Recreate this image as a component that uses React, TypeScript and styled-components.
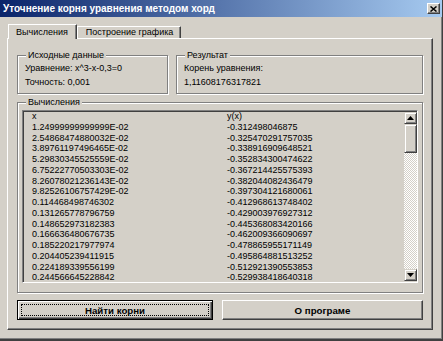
import styled, { createGlobalStyle } from "styled-components";

const GlobalStyle = createGlobalStyle`
  html, body {
    margin: 0;
    padding: 0;
    background: #d4d0c8;
  }
  body {
    font-family: "Liberation Sans", Arial, sans-serif;
    font-size: 9px;
    color: #000;
  }
`;

const Window = styled.div`
  width: 443px;
  height: 341px;
  box-sizing: border-box;
  background: #d4d0c8;
  border-right: 1px solid #404040;
  border-bottom: 2px solid #404040;
  box-shadow: inset -1px -1px 0 #808080;
  display: flex;
  flex-direction: column;
  overflow: hidden;
`;

const TitleBar = styled.div`
  flex: none;
  height: 17px;
  display: flex;
  align-items: center;
  justify-content: space-between;
  padding: 0 2px 0 3px;
  background: linear-gradient(to right, #0a246a, #a6caf0);
  color: #fff;
  font-weight: bold;
  font-size: 10px;
`;

const CloseBtn = styled.div`
  width: 13px;
  height: 11px;
  box-sizing: border-box;
  background: #d4d0c8;
  border: 1px solid;
  border-color: #fff #404040 #404040 #fff;
  box-shadow: inset -1px -1px 0 #808080;
  display: flex;
  align-items: center;
  justify-content: center;
`;

const TabStrip = styled.div`
  flex: none;
  display: flex;
  align-items: flex-end;
  height: 14px;
  margin-top: 7px;
  padding-left: 8px;
`;

const Tab = styled.div<{ $active?: boolean }>`
  box-sizing: border-box;
  height: ${(p) => (p.$active ? "15px" : "12px")};
  margin-bottom: ${(p) => (p.$active ? "-1px" : "0")};
  position: relative;
  z-index: ${(p) => (p.$active ? 1 : 0)};
  padding: ${(p) => (p.$active ? "2px 8px 0 7px" : "0 7px 0 8px")};
  line-height: 11px;
  background: #d4d0c8;
  border-top: 1px solid #fff;
  border-left: 1px solid #fff;
  border-right: 1px solid #404040;
  box-shadow: inset -1px 0 0 #808080;
`;

const Panel = styled.div`
  flex: none;
  box-sizing: border-box;
  width: 426px;
  height: 292px;
  margin-left: 7px;
  padding: 16px 9px 0 9px;
  border-top: 1px solid #fff;
  border-left: 1px solid #fff;
  border-right: 1px solid #404040;
  border-bottom: 1px solid #404040;
  box-shadow: inset -1px -1px 0 #808080;
  display: flex;
  flex-direction: column;
`;

const TopRow = styled.div`
  display: grid;
  grid-template-columns: 151px 1fr;
  gap: 8px;
`;

const Group = styled.div`
  position: relative;
  border: 1px solid #808080;
  box-shadow: inset 1px 1px 0 #fff, 1px 1px 0 #fff;
  padding: 6px 7px 4px 7px;
  line-height: 13.5px;
`;

const GroupLabel = styled.span`
  position: absolute;
  top: -6px;
  left: 8px;
  padding: 0 2px;
  line-height: 11px;
  background: #d4d0c8;
`;

const CalcGroup = styled(Group)`
  margin-top: 8px;
  padding: 7px 4px 9px 4px;
  line-height: normal;
`;

const ListBox = styled.div`
  height: 173px;
  box-sizing: border-box;
  border-top: 1px solid #808080;
  border-left: 1px solid #808080;
  border-right: 1px solid #fff;
  border-bottom: 1px solid #fff;
  box-shadow: inset 1px 1px 0 #404040;
  padding: 1px 0 1px 1px;
  display: flex;
  overflow: hidden;
`;

const Rows = styled.div`
  flex: 1;
  margin-top: -1px;
  padding-left: 8px;
  overflow: hidden;
`;

const Row = styled.div`
  display: grid;
  grid-template-columns: 195px 1fr;
  height: 10.75px;
  line-height: 10.75px;
  white-space: nowrap;
`;

const ScrollBar = styled.div`
  width: 13px;
  flex: none;
  display: flex;
  flex-direction: column;
`;

const ScrollBtn = styled.div<{ $h: number }>`
  height: ${(p) => p.$h}px;
  flex: none;
  box-sizing: border-box;
  background: #d4d0c8;
  border: 1px solid;
  border-color: #d4d0c8 #404040 #404040 #d4d0c8;
  box-shadow: inset 1px 1px 0 #fff, inset -1px -1px 0 #808080;
  display: flex;
  align-items: center;
  justify-content: center;
`;

const Track = styled.div`
  flex: 1;
  background: repeating-conic-gradient(#d4d0c8 0 25%, #fff 0 50%) 0 0 / 2px 2px;
`;

const ButtonRow = styled.div`
  display: grid;
  grid-template-columns: 196px 1fr;
  gap: 9px;
  margin-top: 7px;
`;

const Button = styled.div<{ $default?: boolean }>`
  height: 20px;
  box-sizing: border-box;
  background: #d4d0c8;
  font-weight: bold;
  font-size: 9.7px;
  display: flex;
  align-items: center;
  justify-content: center;
  border: 1px solid;
  border-color: ${(p) => (p.$default ? "#000" : "#fff #404040 #404040 #fff")};
  box-shadow: ${(p) =>
    p.$default
      ? "inset 1px 1px 0 #fff, inset -1px -1px 0 #404040, inset -2px -2px 0 #808080"
      : "inset -1px -1px 0 #808080"};
  padding: 3px;
`;

const FocusRect = styled.div`
  flex: 1;
  align-self: stretch;
  border: 1px dotted #000;
  display: flex;
  align-items: center;
  justify-content: center;
`;

const xs = [
  "1.24999999999999E-02",
  "2.54868474880032E-02",
  "3.89761197496465E-02",
  "5.29830345525559E-02",
  "6.75222770503303E-02",
  "8.26078021236143E-02",
  "9.82526106757429E-02",
  "0.114468498746302",
  "0.131265778796759",
  "0.148652973182383",
  "0.166636480676735",
  "0.185220217977974",
  "0.204405239411915",
  "0.224189339556199",
  "0.244566645228842",
];

const ys = [
  "-0.312498046875",
  "-0.325470291757035",
  "-0.338916909648521",
  "-0.352834300474622",
  "-0.367214425575393",
  "-0.382044082436479",
  "-0.397304121680061",
  "-0.412968613748402",
  "-0.429003976927312",
  "-0.445368083420166",
  "-0.462009366090697",
  "-0.478865955171149",
  "-0.495864881513252",
  "-0.512921390553853",
  "-0.529938418640318",
];

function Arrow({ down }: { down?: boolean }) {
  return (
    <svg width="7" height="4" viewBox="0 0 7 4">
      <path d={down ? "M0 0H7L3.5 4Z" : "M3.5 0L7 4H0Z"} fill="#000" />
    </svg>
  );
}

function App() {
  return (
    <>
      <GlobalStyle />
      <Window>
        <TitleBar>
          <span>Уточнение корня уравнения методом хорд</span>
          <CloseBtn>
            <svg width="7" height="6" viewBox="0 0 7 6">
              <path d="M0.5 0.5L6.5 5.5M6.5 0.5L0.5 5.5" stroke="#000" strokeWidth="1.5" />
            </svg>
          </CloseBtn>
        </TitleBar>
        <TabStrip>
          <Tab $active>Вычисления</Tab>
          <Tab>Построение графика</Tab>
        </TabStrip>
        <Panel>
          <TopRow>
            <Group>
              <GroupLabel>Исходные данные</GroupLabel>
              <div>Уравнение: x^3-x-0,3=0</div>
              <div>Точность: 0,001</div>
            </Group>
            <Group>
              <GroupLabel>Результат</GroupLabel>
              <div>Корень уравнения:</div>
              <div>1,11608176317821</div>
            </Group>
          </TopRow>
          <CalcGroup>
            <GroupLabel>Вычисления</GroupLabel>
            <ListBox>
              <Rows>
                <Row>
                  <span>x</span>
                  <span>y(x)</span>
                </Row>
                {xs.map((x, i) => (
                  <Row key={x}>
                    <span>{x}</span>
                    <span>{ys[i]}</span>
                  </Row>
                ))}
              </Rows>
              <ScrollBar>
                <ScrollBtn $h={12}>
                  <Arrow />
                </ScrollBtn>
                <ScrollBtn $h={29} />
                <Track />
                <ScrollBtn $h={12}>
                  <Arrow down />
                </ScrollBtn>
              </ScrollBar>
            </ListBox>
          </CalcGroup>
          <ButtonRow>
            <Button $default>
              <FocusRect>Найти корни</FocusRect>
            </Button>
            <Button>О програме</Button>
          </ButtonRow>
        </Panel>
      </Window>
    </>
  );
}

export default App;
